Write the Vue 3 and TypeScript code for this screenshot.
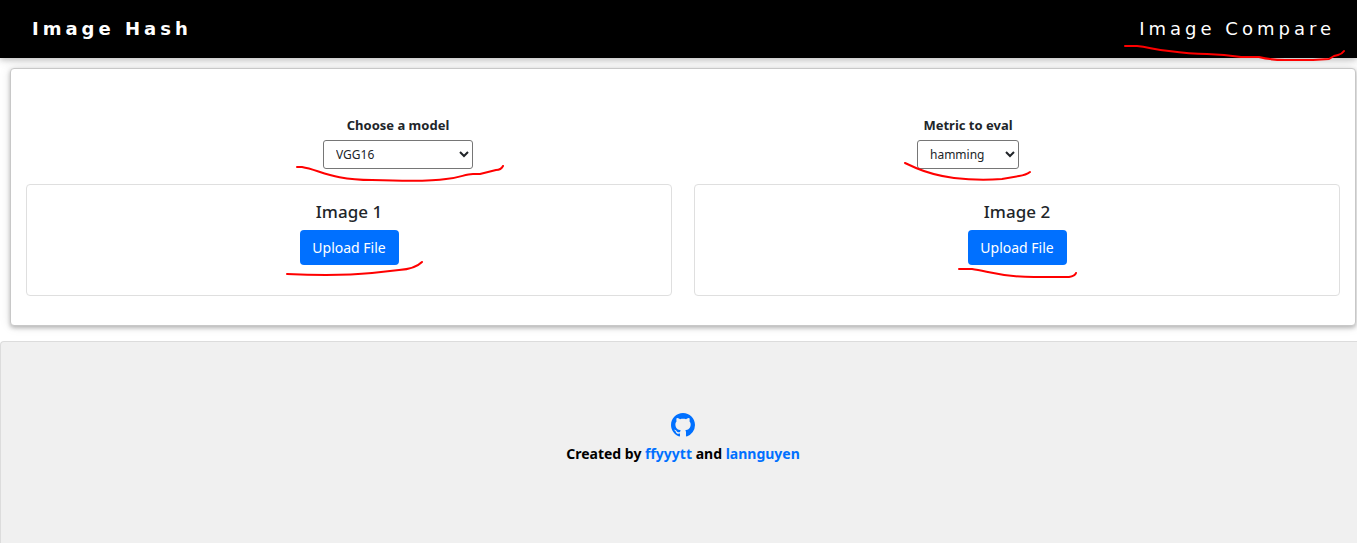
<script setup lang="ts">
import { ref } from 'vue'

const models = ['VGG16', 'VGG19', 'ResNet50', 'InceptionV3']
const metrics = ['hamming', 'cosine']
const model = ref('VGG16')
const metric = ref('hamming')
const images = [
  { title: 'Image 1', mark: 'M1 30C24 31 55 32 86 29L113 26Q129 25 136 18', kind: 'first' },
  { title: 'Image 2', mark: 'M1 25H14C30 27 42 33 76 33H111Q117 32 118 29', kind: 'second' },
]
</script>

<template>
  <header class="navbar">
    <a href="#" class="brand">Image Hash</a>
    <span class="marked">
      <a href="#compare" class="nav-link">Image Compare</a>
      <svg class="mark nav-mark" width="222" height="18" viewBox="0 0 222 18" aria-hidden="true">
        <path d="M2 3H14C26 4 31 7 46 8C60 10 69 11 84 11L101 12L118 14H136Q147 17 162 17H190L206 16L211 13L215 12Q219 11 221 8" />
      </svg>
    </span>
  </header>

  <main class="panel">
    <div class="options">
      <div class="option">
        <label for="model">Choose a model</label>
        <span class="marked">
          <select id="model" v-model="model" class="model-select">
            <option v-for="m in models" :key="m">{{ m }}</option>
          </select>
          <svg class="mark model-mark" width="210" height="18" viewBox="0 0 210 18" aria-hidden="true">
            <path d="M1 2H6C24 5 36 15 76 15C105 16 138 16 150 14C164 13 169 9 177 9H184L200 5Q205 5 207 1" />
          </svg>
        </span>
      </div>
      <div class="option">
        <label for="metric">Metric to eval</label>
        <span class="marked">
          <select id="metric" v-model="metric" class="metric-select">
            <option v-for="m in metrics" :key="m">{{ m }}</option>
          </select>
          <svg class="mark metric-mark" width="130" height="20" viewBox="0 0 130 20" aria-hidden="true">
            <path d="M1 1L12 6C26 12 35 14 50 16C67 18 85 18 98 17L115 14Q122 13 126 10" />
          </svg>
        </span>
      </div>
    </div>

    <div class="images">
      <section v-for="image in images" :key="image.title" class="image-card">
        <h2>{{ image.title }}</h2>
        <span class="marked">
          <button type="button" class="upload">Upload File</button>
          <svg class="mark upload-mark" :class="image.kind" width="140" height="40" viewBox="0 0 140 40" aria-hidden="true">
            <path :d="image.mark" />
          </svg>
        </span>
      </section>
    </div>
  </main>

  <footer class="footer">
    <a href="#github" class="github" aria-label="GitHub">
      <svg width="24" height="24" viewBox="0 0 16 16" aria-hidden="true">
        <path fill="currentColor" d="M8 0C3.58 0 0 3.58 0 8c0 3.54 2.29 6.53 5.47 7.59.4.07.55-.17.55-.38 0-.19-.01-.82-.01-1.49-2.01.37-2.53-.49-2.69-.94-.09-.23-.48-.94-.82-1.13-.28-.15-.68-.52-.01-.53.63-.01 1.08.58 1.23.82.72 1.21 1.87.87 2.33.66.07-.52.28-.87.51-1.07-1.78-.2-3.64-.89-3.64-3.95 0-.87.31-1.59.82-2.15-.08-.2-.36-1.02.08-2.12 0 0 .67-.21 2.2.82.64-.18 1.32-.27 2-.27s1.36.09 2 .27c1.53-1.04 2.2-.82 2.2-.82.44 1.1.16 1.92.08 2.12.51.56.82 1.27.82 2.15 0 3.07-1.87 3.75-3.65 3.95.29.25.54.73.54 1.48 0 1.07-.01 1.93-.01 2.2 0 .21.15.46.55.38A8.01 8.01 0 0 0 16 8c0-4.42-3.58-8-8-8z" />
      </svg>
    </a>
    <p>Created by <a href="#ffyyytt">ffyyytt</a> and <a href="#lannguyen">lannguyen</a></p>
  </footer>
</template>

<style>
html,
body,
#app {
  height: 100%;
}
body {
  background: #fff;
  color: #212529;
  font-family: "Segoe UI", "Noto Sans", "Open Sans", sans-serif;
  font-size: 14px;
  line-height: 20px;
}
#app {
  display: flex;
  flex-direction: column;
}
</style>

<style scoped>
* {
  box-sizing: border-box;
}
a {
  color: #0070ff;
  text-decoration: none;
}
.navbar {
  display: flex;
  flex: none;
  align-items: center;
  justify-content: space-between;
  height: 58px;
  padding: 0 22px 0 32px;
  background: #000;
  box-shadow: 0 2px 5px rgba(0, 0, 0, 0.16), 0 2px 10px rgba(0, 0, 0, 0.12);
  font-family: Verdana, "DejaVu Sans", sans-serif;
  font-size: 18px;
  letter-spacing: 4px;
}
.navbar a {
  color: #fff;
}
.brand {
  font-weight: 700;
}
.marked {
  position: relative;
  display: inline-block;
}
.mark {
  position: absolute;
  z-index: 1;
  fill: none;
  stroke: #f00;
  stroke-width: 2;
  stroke-linecap: round;
  stroke-linejoin: round;
  pointer-events: none;
}
.nav-mark {
  right: -10px;
  top: 24px;
}
.panel {
  flex: none;
  margin: 10px 1px 0 10px;
  padding: 46px 15px 29px;
  border: 1px solid #c8c8c8;
  border-radius: 4px;
  background: #fff;
  box-shadow: 0 2px 4px rgba(0, 0, 0, 0.25), 0 0 12px rgba(0, 0, 0, 0.1);
}
.options {
  display: grid;
  grid-template-columns: 1fr 1fr;
  max-width: 1140px;
  margin: 0 auto 15px;
}
.option {
  display: flex;
  flex-direction: column;
  align-items: center;
  gap: 5px;
}
label {
  font-size: 13px;
  font-weight: 700;
}
select {
  display: block;
  height: 29px;
  padding: 0 0 0 8px;
  border: 1px solid #767676;
  border-radius: 3px;
  background: #fff;
  color: #212529;
  font-family: inherit;
  font-size: 12px;
}
.model-select {
  width: 150px;
}
.metric-select {
  width: 102px;
}
.model-mark {
  left: -27px;
  top: 25px;
}
.metric-mark {
  left: -13px;
  top: 22px;
}
.images {
  display: grid;
  grid-template-columns: 1fr 1fr;
  gap: 22px;
}
.image-card {
  display: flex;
  flex-direction: column;
  align-items: center;
  padding: 16px 16px 30px;
  border: 1px solid #dfdfdf;
  border-radius: 4px;
}
h2 {
  margin: 0 0 8px;
  font-size: 17px;
  font-weight: 500;
  line-height: 21px;
}
.upload {
  display: block;
  min-width: 99px;
  height: 35px;
  padding: 0 12px;
  border: 0;
  border-radius: 4px;
  background: #0070ff;
  color: #fff;
  font-family: inherit;
  font-size: 14px;
}
.upload-mark {
  top: 14px;
}
.upload-mark.first {
  left: -14px;
}
.upload-mark.second {
  left: -10px;
}
.footer {
  display: flex;
  flex: 1 0 202px;
  flex-direction: column;
  align-items: center;
  margin-top: 15px;
  padding: 71px 0 0 8px;
  border: 1px solid #dcdcdc;
  border-width: 1px 0 0 1px;
  border-radius: 4px 0 0 0;
  background: #f0f0f0;
  color: #000;
  font-weight: 700;
}
.github {
  display: block;
  height: 24px;
}
.github svg {
  display: block;
}
.footer p {
  margin: 7px 0 0;
}
</style>
